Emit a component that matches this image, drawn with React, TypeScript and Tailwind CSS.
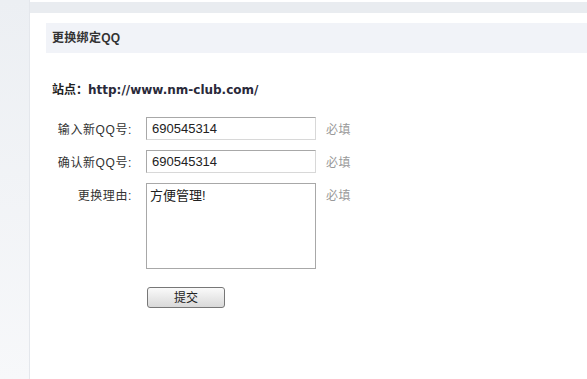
export default function App() {
  const font = "font-['Liberation_Sans','Noto_Sans_CJK_SC',sans-serif]";

  return (
    <div className={`flex h-[379px] w-[587px] overflow-hidden bg-white text-[12px] text-[#333] ${font}`}>
      {/* left side strip */}
      <div className="w-[30px] shrink-0 border-r border-[#e4e7ec] bg-gradient-to-b from-[#eceff3] to-[#f7f8fa]" />

      <div className="flex flex-1 flex-col">
        {/* top strip */}
        <div className="h-[13px] shrink-0 border-t-2 border-white bg-[#e9ecf0]" />

        <div className="flex-1 pl-[16px] pt-[10px]">
          <div className="flex h-[30px] items-center bg-[#f1f3f8] pl-[6px] text-[12px] font-bold tracking-[0.3px] text-[#333]">
            更换绑定QQ
          </div>

          <div className="mt-[28px] pl-[6px] text-[12px] font-bold">
            <span className="text-[#222]">站点：</span>
            <span className="font-['DejaVu_Sans',sans-serif] text-[#2a2a3a]">http://www.nm-club.com/</span>
          </div>

          <div className="mt-[18px] flex flex-col gap-[10px]">
            <FormRow label="输入新QQ号:">
              <input
                defaultValue="690545314"
                className="h-[23px] w-[170px] border border-[#a8a8a8] border-b-[#d8d8d8] border-r-[#d8d8d8] px-[5px] text-[13px] text-[#222] outline-none"
              />
            </FormRow>
            <FormRow label="确认新QQ号:">
              <input
                defaultValue="690545314"
                className="h-[23px] w-[170px] border border-[#a8a8a8] border-b-[#d8d8d8] border-r-[#d8d8d8] px-[5px] text-[13px] text-[#222] outline-none"
              />
            </FormRow>
            <FormRow label="更换理由:">
              <textarea
                defaultValue="方便管理!"
                className="h-[86px] w-[170px] resize-none border border-[#a8a8a8] px-[3px] py-[4px] text-[13px] leading-[16px] text-[#222] outline-none"
              />
            </FormRow>
          </div>

          <div className="mt-[18px] pl-[101px]">
            <button className="h-[21px] w-[78px] rounded-[3px] border border-[#777] bg-gradient-to-b from-[#fafafa] to-[#d9d9d9] text-[12px] text-[#222]">
              提交
            </button>
          </div>
        </div>
      </div>
    </div>
  );
}

function FormRow({ label, children }: { label: string; children: React.ReactNode }) {
  return (
    <div className="flex items-start">
      <label className="w-[100px] pr-[14px] pt-[4px] text-right text-[12px] tracking-[0.6px] text-[#333]">
        {label}
      </label>
      {children}
      <span className="pl-[10px] pt-[4px] text-[12px] tracking-[0.5px] text-[#999]">必填</span>
    </div>
  );
}
